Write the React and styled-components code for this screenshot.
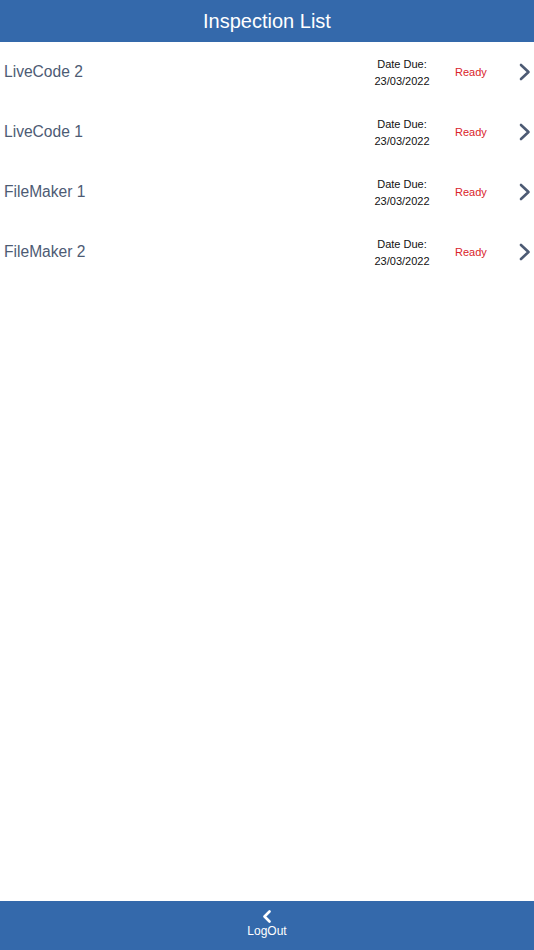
import styled, { createGlobalStyle } from 'styled-components';

const GlobalStyle = createGlobalStyle`
  html, body {
    margin: 0;
    padding: 0;
    background: #ffffff;
    font-family: "Liberation Sans", Arial, sans-serif;
  }
`;

const Screen = styled.div`
  width: 534px;
  height: 950px;
  display: flex;
  flex-direction: column;
  background: #ffffff;
`;

const Header = styled.div`
  height: 42px;
  flex-shrink: 0;
  background: #3469ab;
  color: #ffffff;
  font-size: 20px;
  display: flex;
  align-items: center;
  justify-content: center;
`;

const List = styled.div`
  flex: 1;
  display: flex;
  flex-direction: column;
`;

const Row = styled.div`
  height: 60px;
  display: flex;
  align-items: center;
  padding: 0 3px 0 4px;
`;

const Name = styled.div`
  flex: 1;
  font-size: 15.6px;
  color: #4d5b74;
`;

const DueBox = styled.div`
  width: 80px;
  text-align: center;
  font-size: 11px;
  color: #111111;
  line-height: 17px;
  margin-right: 13px;
  padding-top: 1px;
`;

const Status = styled.div`
  width: 50px;
  font-size: 11px;
  color: #d9232a;
  margin-right: 14px;
`;

const Chevron = styled.svg`
  width: 12px;
  height: 18px;
  color: #4d5b74;
`;

const Footer = styled.div`
  height: 49px;
  flex-shrink: 0;
  box-sizing: border-box;
  padding-bottom: 4px;
  background: #3469ab;
  color: #ffffff;
  display: flex;
  flex-direction: column;
  align-items: center;
  justify-content: center;
  gap: 1px;
`;

const BackIcon = styled.svg`
  width: 10px;
  height: 13px;
`;

const FooterLabel = styled.div`
  font-size: 12px;
`;

const items = ['LiveCode 2', 'LiveCode 1', 'FileMaker 1', 'FileMaker 2'];

const App = () => {
  return (
    <>
      <GlobalStyle />
      <Screen>
        <Header>Inspection List</Header>
        <List>
          {items.map((name) => (
            <Row key={name}>
              <Name>{name}</Name>
              <DueBox>
                Date Due:
                <br />
                23/03/2022
              </DueBox>
              <Status>Ready</Status>
              <Chevron viewBox="0 0 12 18">
                <path d="M2 2 L9.5 9 L2 16" fill="none" stroke="currentColor" strokeWidth="2.6" strokeLinecap="round" strokeLinejoin="round" />
              </Chevron>
            </Row>
          ))}
        </List>
        <Footer>
          <BackIcon viewBox="0 0 10 13">
            <path d="M7.5 1.5 L2.5 6.5 L7.5 11.5" fill="none" stroke="#ffffff" strokeWidth="2.6" strokeLinecap="round" strokeLinejoin="round" />
          </BackIcon>
          <FooterLabel>LogOut</FooterLabel>
        </Footer>
      </Screen>
    </>
  );
};

export default App;
